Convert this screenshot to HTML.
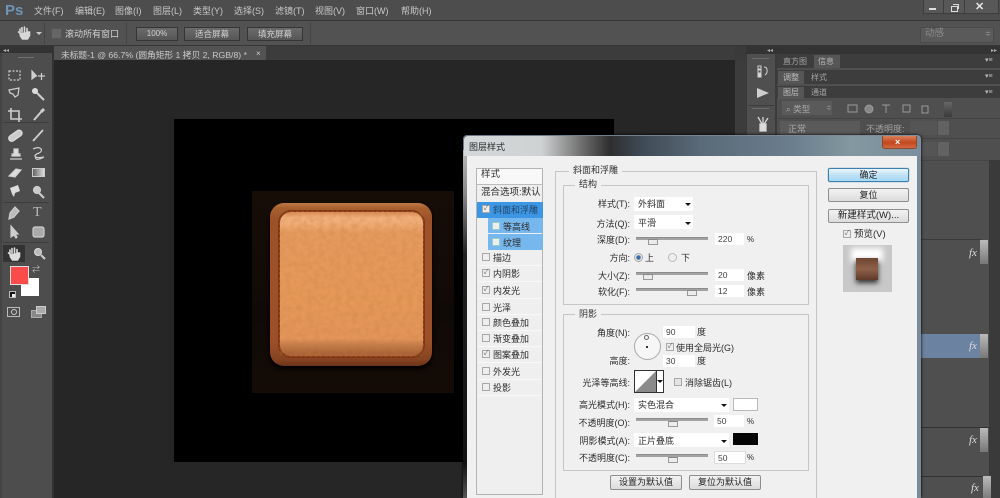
<!DOCTYPE html>
<html><head><meta charset="utf-8">
<style>
html,body{margin:0;padding:0;background:#4b4b4b}
#r{position:relative;width:1000px;height:498px;overflow:hidden;background:#4b4b4b;font-family:"Liberation Sans","Noto Sans CJK SC",sans-serif;font-size:9px;color:#222}
#r div,#r span,#r svg{position:absolute}
.t{white-space:nowrap;line-height:12px;filter:blur(.35px)}
.m{color:#c9c9c9;font-size:9px;top:5px}
.d{color:#2c2c2c;font-size:9px}
.dr{color:#2c2c2c;font-size:9px;text-align:right;width:70px;left:560px}
.ob{top:27px;height:12px;background:linear-gradient(#6b6b6b,#565656);border:1px solid #353535;color:#d2d2d2;text-align:center;line-height:12px;font-size:8.5px;filter:blur(.35px)}
.pt{color:#a5a5a5;font-size:8px}
.ck{width:6px;height:6px;background:#eee;border:1px solid #a8a8a8;left:482px;color:#666;font-size:7px;line-height:6px;text-align:center}
.sel{background:#fff;height:14px;border-radius:1px}
.ar{width:0;height:0;border-left:3px solid transparent;border-right:3px solid transparent;border-top:3px solid #111}
.inp{background:#fff;height:12px;font-size:8.5px;line-height:13px;padding-left:3px;color:#444;filter:blur(.3px)}
.sl{height:2px;width:72px;left:636px;background:#a2a2a2;border-top:1px solid #8d8d8d}
.th{width:8px;height:4px;background:#ececec;border:1px solid #999;border-top-color:#888}
.fs{border:1px solid #c6c6c6}
.lg{background:#f0f0f0;padding:0 4px;color:#333}
.btn{background:linear-gradient(#f2f2f2,#dcdcdc);border:1px solid #8e8e8e;border-radius:2px;text-align:center;color:#222;line-height:13px;filter:blur(.3px);font-size:9px}
.fx{color:#ddd;font-family:"Liberation Serif",serif;font-style:italic;font-size:11px;left:969px}
.h{left:980px;width:8px;height:24px;background:linear-gradient(#bbb,#777)}
.sep{height:1px;background:#f8f8f8;left:477px;width:65px}
</style></head><body><div id="r">

<!-- menu bar -->
<div style="left:0;top:0;width:1000px;height:20px;background:#4d4d4d;border-bottom:1px solid #363636"></div>
<span class="t" style="left:5px;top:2px;font-size:15px;line-height:18px;font-weight:bold;color:#6f94b4">Ps</span>
<span class="t m" style="left:34px">文件(F)</span><span class="t m" style="left:75px">编辑(E)</span><span class="t m" style="left:115px">图像(I)</span><span class="t m" style="left:153px">图层(L)</span><span class="t m" style="left:193px">类型(Y)</span><span class="t m" style="left:234px">选择(S)</span><span class="t m" style="left:275px">滤镜(T)</span><span class="t m" style="left:315px">视图(V)</span><span class="t m" style="left:356px">窗口(W)</span><span class="t m" style="left:401px">帮助(H)</span>
<div style="left:923px;top:0;width:74px;height:13px;background:#585858;border:1px solid #3e3e3e;border-top:0"></div>
<div style="left:943px;top:0;width:1px;height:13px;background:#3e3e3e"></div><div style="left:964px;top:0;width:1px;height:13px;background:#3e3e3e"></div>
<div style="left:929px;top:8px;width:7px;height:2px;background:#ddd"></div>
<div style="left:951px;top:6px;width:5px;height:4px;border:1px solid #ddd"></div><div style="left:953px;top:4px;width:5px;height:4px;border:1px solid #ddd;border-left:0;border-bottom:0"></div>
<span class="t" style="left:975px;top:1px;color:#e6e6e6;font-size:11px;font-weight:bold">✕</span>

<!-- options bar -->
<div style="left:0;top:21px;width:1000px;height:24px;background:#525252;border-bottom:1px solid #363636"></div>
<svg style="left:17px;top:25px" width="14" height="15" viewBox="0 0 14 15"><path d="M3 8V4M5 7V2.5M7.5 7V2M10 7.5V3.5M3 8L1.5 7M3 8l.5 3 2 3h5l2-3.500V7H10" fill="#d8d8d8" stroke="#d8d8d8" stroke-width="1.600" stroke-linecap="round"/></svg>
<div class="ar" style="left:36px;top:32px;border-top-color:#ccc"></div>
<div style="left:44px;top:22px;width:1px;height:22px;background:#444"></div>
<div style="left:51px;top:28px;width:9px;height:9px;background:#666;border:1px solid #555"></div>
<span class="t" style="left:65px;top:28px;color:#d2d2d2;font-size:9px">滚动所有窗口</span>
<div style="left:126px;top:22px;width:1px;height:22px;background:#444"></div>
<div class="ob" style="left:136px;width:40px;font-size:8px">100%</div>
<div class="ob" style="left:184px;width:54px">适合屏幕</div>
<div class="ob" style="left:247px;width:54px">填充屏幕</div>
<div style="left:310px;top:22px;width:1px;height:22px;background:#444"></div>
<div style="left:920px;top:27px;width:72px;height:14px;background:#5a5a5a;border:1px solid #4a4a4a"></div>
<span class="t" style="left:925px;top:28px;color:#8c8c8c;font-size:9.500px">动感</span>
<span class="t" style="left:985px;top:29px;color:#999;font-size:7px">≑</span>

<!-- canvas area -->
<div style="left:52px;top:46px;width:695px;height:452px;background:#3a3a3a"></div>
<div style="left:54px;top:46px;width:681px;height:14px;background:#3c3c3c"></div>
<div style="left:54px;top:46px;width:212px;height:14px;background:#535353"></div>
<span class="t" style="left:61px;top:49px;color:#c8c8c8;font-size:8.700px">未标题-1 @ 66.7% (圆角矩形 1 拷贝 2, RGB/8) *</span>
<span class="t" style="left:256px;top:48px;color:#ccc;font-size:8px">×</span>
<div style="left:54px;top:60px;width:681px;height:438px;background:#262626"></div>
<div style="left:735px;top:60px;width:11px;height:438px;background:#3c3c3c"></div>
<div style="left:174px;top:119px;width:440px;height:343px;background:#000"></div>

<!-- leather icon -->
<div style="left:252px;top:191px;width:202px;height:202px;background:linear-gradient(#170d07,#100a06 60%,#140b06)"></div>
<div style="left:270px;top:203px;width:162px;height:163px;border-radius:14px;background:linear-gradient(#bf7a48 0,#a9602f 3%,#9c5229 10%,#9b5029 85%,#854322 96%,#6a3318);box-shadow:0 3px 5px #000"></div>
<div style="left:278px;top:210px;width:147px;height:148px;border-radius:13px;background:#7a3817"></div>
<div style="left:280px;top:212px;width:143px;height:144px;border-radius:11px;background:linear-gradient(#d98a55 0,#f3b17c 4%,#f2ad77 8%,#e79a5e 14%,#e69859 60%,#e4945a 88%,#c67d4b 92%,#aa6237 98%)"></div>
<svg style="left:280px;top:212px" width="143" height="144" viewBox="0 0 143 144"><defs><filter id="lt"><feTurbulence type="fractalNoise" baseFrequency=".18" numOctaves="3" seed="4"/><feColorMatrix values="0 0 0 0 .5 0 0 0 0 .22 0 0 0 0 .05 0 0 0 .6 -.2"/></filter></defs><rect x="3" y="3" width="137" height="138" rx="10" filter="url(#lt)"/></svg>
<div style="left:279px;top:211px;width:143px;height:144px;border-radius:12px;border:1px dashed #a04a1e"></div>

<!-- tools panel -->
<div style="left:0;top:46px;width:52px;height:452px;background:#4d4d4d;border-right:2px solid #333"></div>
<div style="left:0;top:46px;width:2px;height:452px;background:#444"></div>
<div style="left:0;top:46px;width:52px;height:7px;background:#333"></div>
<span class="t" style="left:3px;top:45px;color:#aaa;font-size:6px">◂◂</span>
<div style="left:18px;top:57px;width:16px;height:1px;background:#707070"></div>
<div style="left:3px;top:122px;width:46px;height:1px;background:#3d3d3d"></div>
<div style="left:3px;top:202px;width:46px;height:1px;background:#3d3d3d"></div>
<div style="left:3px;top:242px;width:46px;height:1px;background:#3d3d3d"></div>
<svg style="left:0;top:60px" width="52" height="210" viewBox="0 60 52 210" fill="none" stroke="#cfcfcf" stroke-width="1.200">
<rect x="9" y="71" width="11" height="9" stroke-dasharray="2 1.500"/>
<path d="M32 71v8l2.500-2 2-1z" fill="#cfcfcf"/><path d="M38 76h7M41.500 73v7"/>
<path d="M9 90l10-2-1 7-3 2-2-3-3-1z"/>
<path d="M36 92l8 8" stroke-width="2"/><circle cx="35" cy="91" r="3" fill="#ddd" stroke="none"/>
<path d="M11 108v11h11M8 111h11v11" stroke-width="1.600"/>
<path d="M34 120l7-8" stroke-width="2"/><path d="M41 112l3-3" stroke-width="3"/>
<rect x="8" y="133" width="15" height="6" rx="3" transform="rotate(-35 15 136)" fill="#ccc" stroke="#ddd"/>
<path d="M33 141l10-11" stroke-width="1.800"/>
<path d="M10 159h12M12 156h8v-2h-2v-5h-4v5h-2z" fill="#ddd"/>
<path d="M33 149c8-4 11 2 6 4-6 2-6 6 5 4-5 3-10 3-8 0"/>
<path d="M9 176l7-7 5 1-6 7z" fill="#ddd"/>
<path d="M10 188l8-3 2 6-5 2-1 4-2-3z" fill="#ddd" stroke="none"/>
<circle cx="37" cy="190" r="3.500" fill="#ccc" stroke="#ccc"/><path d="M39 193l5 5" stroke-width="2"/>
<path d="M15 207l-5 6-1 6 5-2 5-6z" fill="#bbb"/>
<path d="M11 226v11l3-2 2 3 1-1-2-3h3z" fill="#ccc"/>
<rect x="33" y="227" width="11" height="10" rx="2" fill="#aaa"/>
</svg>
<div style="left:32px;top:168px;width:13px;height:9px;background:linear-gradient(90deg,#666,#ddd);border:1px solid #ccc;box-sizing:border-box"></div>
<span class="t" style="left:33px;top:205px;font-family:'Liberation Serif',serif;font-size:14px;line-height:16px;color:#bbb">T</span>
<div style="left:3px;top:245px;width:22px;height:17px;background:#333"></div>
<svg style="left:7px;top:246px" width="14" height="15" viewBox="0 0 14 15"><path d="M3 8V4M5 7V2.500M7.500 7V2M10 7.500V3.500M3 8L1.500 7M3 8l.5 3 2 3h5l2-3.500V7H10" fill="#ddd" stroke="#ddd" stroke-width="1.600" stroke-linecap="round"/></svg>
<svg style="left:32px;top:246px" width="15" height="15" viewBox="0 0 15 15"><circle cx="6" cy="6" r="3.500" fill="#bbb" stroke="#ddd"/><path d="M9 9l4 4" stroke="#ccc" stroke-width="2"/></svg>
<div style="left:10px;top:266px;width:17px;height:17px;background:#fa4b4b;border:1px solid #ddd;z-index:2"></div>
<div style="left:21px;top:278px;width:18px;height:18px;background:#fff"></div>
<div style="left:9px;top:291px;width:5px;height:5px;background:#111;border:1px solid #bbb"></div>
<div style="left:12px;top:294px;width:3px;height:3px;background:#eee"></div>
<span class="t" style="left:32px;top:264px;color:#bbb;font-size:8px">⇄</span>
<div style="left:7px;top:307px;width:11px;height:8px;border:1px solid #bbb"></div>
<div style="left:11px;top:309px;width:4px;height:4px;border:1px solid #ccc;border-radius:50%"></div>
<div style="left:31px;top:310px;width:9px;height:6px;background:#888;border:1px solid #aaa"></div>
<div style="left:36px;top:306px;width:8px;height:6px;background:#aaa;border:1px solid #ccc"></div>

<!-- right panels -->
<div style="left:746px;top:46px;width:254px;height:452px;background:#4f4f4f;border-left:1px solid #3a3a3a"></div>
<div style="left:746px;top:46px;width:254px;height:8px;background:#333"></div>
<span class="t" style="left:767px;top:45px;color:#aaa;font-size:6px">◂◂</span><span class="t" style="left:991px;top:45px;color:#aaa;font-size:6px">▸▸</span>
<div style="left:775px;top:54px;width:2px;height:444px;background:#3b3b3b"></div>
<div style="left:752px;top:58px;width:17px;height:1px;background:#6b6b6b"></div>
<div style="left:748px;top:105px;width:26px;height:1px;background:#3c3c3c"></div>
<div style="left:752px;top:108px;width:17px;height:1px;background:#6b6b6b"></div>
<svg style="left:756px;top:64px" width="15" height="15" viewBox="0 0 15 15" fill="none" stroke="#d0d0d0"><rect x="2" y="2" width="3" height="3"/><rect x="2" y="6" width="3" height="3"/><rect x="2" y="10" width="3" height="3" fill="#ddd"/><path d="M8 3c4 0 4 6 1 8"/></svg>
<svg style="left:756px;top:86px" width="14" height="14" viewBox="0 0 14 14"><path d="M1 2l12 5-12 5z" fill="#cfcfcf"/></svg>
<svg style="left:755px;top:115px" width="15" height="17" viewBox="0 0 15 17" fill="none" stroke="#d5d5d5" stroke-width="1.300"><path d="M7 9L3 2M8 9V2M9 9l4-6"/><rect x="5" y="9" width="6" height="7" fill="#ddd"/></svg>

<div style="left:777px;top:54px;width:223px;height:14px;background:#3d3d3d"></div>
<div style="left:814px;top:55px;width:26px;height:13px;background:#565656"></div>
<span class="t pt" style="left:783px;top:56px">直方图</span><span class="t pt" style="left:818px;top:56px;color:#b8b8b8">信息</span>
<div style="left:777px;top:70px;width:223px;height:14px;background:#3d3d3d"></div>
<div style="left:778px;top:71px;width:26px;height:13px;background:#565656"></div>
<span class="t pt" style="left:783px;top:72px;color:#c0c0c0">调整</span><span class="t pt" style="left:811px;top:72px">样式</span>
<div style="left:777px;top:86px;width:223px;height:12px;background:#3d3d3d"></div>
<div style="left:778px;top:87px;width:26px;height:12px;background:#565656"></div>
<span class="t pt" style="left:783px;top:87px;color:#c0c0c0">图层</span><span class="t pt" style="left:811px;top:87px">通道</span>
<span class="t" style="left:985px;top:55px;color:#bbb;font-size:7px">▾≡</span><span class="t" style="left:985px;top:71px;color:#bbb;font-size:7px">▾≡</span><span class="t" style="left:985px;top:87px;color:#bbb;font-size:7px">▾≡</span>
<div style="left:782px;top:101px;width:50px;height:14px;background:#5a5a5a"></div>
<span class="t" style="left:786px;top:103px;color:#a8a8a8;font-size:8.500px">⌕ 类型</span>
<span class="t" style="left:826px;top:103px;color:#999;font-size:7px">≑</span>
<svg style="left:846px;top:103px" width="92" height="12" viewBox="0 0 92 12" fill="none" stroke="#999"><rect x="2" y="2" width="9" height="7"/><circle cx="23" cy="6" r="4" fill="#888"/><path d="M36 2h8M40 2v8"/><rect x="57" y="2" width="7" height="7"/><rect x="76" y="3" width="6" height="7"/></svg>
<div style="left:944px;top:102px;width:8px;height:15px;background:linear-gradient(#666,#3a3a3a)"></div>
<div style="left:777px;top:118px;width:223px;height:1px;background:#444"></div>
<div style="left:780px;top:121px;width:80px;height:14px;background:#5a5a5a"></div>
<span class="t" style="left:788px;top:123px;color:#a8a8a8;font-size:9px">正常</span>
<span class="t" style="left:866px;top:123px;color:#a0a0a0;font-size:9px">不透明度:</span>
<div style="left:910px;top:121px;width:27px;height:14px;background:#555"></div>
<div style="left:938px;top:121px;width:11px;height:14px;background:#626262"></div>
<div style="left:777px;top:138px;width:223px;height:1px;background:#444"></div>
<div style="left:921px;top:142px;width:16px;height:14px;background:#555"></div>
<div style="left:938px;top:142px;width:11px;height:14px;background:#626262"></div>
<div style="left:777px;top:160px;width:223px;height:1px;background:#444"></div>
<div style="left:989px;top:160px;width:11px;height:338px;background:#3a3a3a"></div>
<div style="left:921px;top:239px;width:60px;height:1px;background:#3a3a3a"></div>
<div style="left:921px;top:334px;width:67px;height:24px;background:#6b82a0"></div>
<div style="left:921px;top:427px;width:68px;height:1px;background:#333"></div>
<div style="left:921px;top:476px;width:68px;height:1px;background:#333"></div>
<span class="t fx" style="top:247px">fx</span><div class="h" style="top:240px"></div>
<span class="t fx" style="top:340px">fx</span><div class="h" style="top:334px"></div>
<span class="t fx" style="top:434px">fx</span><div class="h" style="top:428px"></div>
<span class="t fx" style="top:482px;left:971px">fx</span><div class="h" style="top:476px;left:983px"></div>

<!-- dialog -->
<div style="left:463px;top:135px;width:458px;height:363px;background:linear-gradient(90deg,#6a7885,#7f8f9e);border-radius:4px 4px 0 0;box-shadow:0 0 3px #000"></div>
<div style="left:463px;top:150px;width:4px;height:348px;background:linear-gradient(#b5b8ba,#8a8a8a 12%,#222 30%,#111 90%,#555)"></div>
<div style="left:464px;top:136px;width:456px;height:20px;border-radius:4px 4px 0 0;background:linear-gradient(90deg,#d4d8da 0,#cfd2d3 17%,#777 25%,#2e2e2e 32%,#3f4a55 39%,#5a6a78 52%,#6b7e8e 72%,#83989f 85%,#7a8e9e 100%)"></div>
<span class="t" style="left:469px;top:141px;color:#2a2a2a;font-size:9px">图层样式</span>
<div style="left:882px;top:136px;width:35px;height:13px;border-radius:0 0 3px 3px;background:linear-gradient(#d9815c,#c2471d 55%,#d46a42);border:1px solid #8a4a30;border-top:0;box-sizing:border-box"></div>
<span class="t" style="left:895px;top:136px;color:#fff;font-size:9px;font-weight:bold">×</span>
<div style="left:467px;top:156px;width:450px;height:342px;background:#f0f0f0"></div>

<!-- left list -->
<div style="left:476px;top:168px;width:67px;height:327px;border:1px solid #b4b4b4;background:#efefef;box-sizing:border-box"></div>
<div style="left:477px;top:169px;width:65px;height:15px;background:#f8f8f8;border-bottom:1px solid #bbb"></div>
<span class="t d" style="left:481px;top:169px;font-size:9.500px">样式</span>
<span class="t d" style="left:481px;top:187px;font-size:9.500px">混合选项:默认</span>
<div style="left:477px;top:202px;width:66px;height:16px;background:#3d96e4"></div>
<div style="left:488px;top:218px;width:55px;height:15px;background:#76b7ee"></div>
<div style="left:488px;top:234px;width:55px;height:16px;background:#76b7ee"></div>
<div class="ck" style="top:205px">✓</div>
<span class="t" style="left:493px;top:204px;color:#24466a;font-size:9px">斜面和浮雕</span>
<div class="ck" style="top:222px;left:492px;border-color:#9cc"></div><span class="t d" style="left:503px;top:221px">等高线</span>
<div class="ck" style="top:238px;left:492px;border-color:#9cc"></div><span class="t d" style="left:503px;top:237px">纹理</span>
<div class="sep" style="top:265px"></div><div class="sep" style="top:281px"></div><div class="sep" style="top:298px"></div><div class="sep" style="top:314px"></div><div class="sep" style="top:330px"></div><div class="sep" style="top:346px"></div><div class="sep" style="top:362px"></div><div class="sep" style="top:379px"></div><div class="sep" style="top:395px"></div>
<div class="ck" style="top:253px"></div><span class="t d" style="left:493px;top:252px">描边</span>
<div class="ck" style="top:269px">✓</div><span class="t d" style="left:493px;top:268px">内阴影</span>
<div class="ck" style="top:286px">✓</div><span class="t d" style="left:493px;top:285px">内发光</span>
<div class="ck" style="top:303px"></div><span class="t d" style="left:493px;top:302px">光泽</span>
<div class="ck" style="top:318px"></div><span class="t d" style="left:493px;top:317px">颜色叠加</span>
<div class="ck" style="top:334px"></div><span class="t d" style="left:493px;top:333px">渐变叠加</span>
<div class="ck" style="top:350px">✓</div><span class="t d" style="left:493px;top:349px">图案叠加</span>
<div class="ck" style="top:367px"></div><span class="t d" style="left:493px;top:366px">外发光</span>
<div class="ck" style="top:383px"></div><span class="t d" style="left:493px;top:382px">投影</span>

<!-- bevel group -->
<div class="fs" style="left:555px;top:171px;width:260px;height:330px"></div>
<span class="t lg" style="left:569px;top:164px">斜面和浮雕</span>
<div class="fs" style="left:563px;top:185px;width:244px;height:118px"></div>
<span class="t lg" style="left:575px;top:178px">结构</span>

<span class="t dr" style="top:198px">样式(T):</span>
<div class="sel" style="left:634px;top:197px;width:59px"></div><span class="t d" style="left:638px;top:198px">外斜面</span><div class="ar" style="left:685px;top:203px"></div>
<span class="t dr" style="top:218px">方法(Q):</span>
<div class="sel" style="left:634px;top:215px;width:59px"></div><span class="t d" style="left:638px;top:217px">平滑</span><div class="ar" style="left:685px;top:222px"></div>
<span class="t dr" style="top:234px">深度(D):</span>
<div class="sl" style="top:237px"></div><div class="th" style="left:648px;top:239px"></div>
<div class="inp" style="left:715px;top:233px;width:26px">220</div><span class="t d" style="left:747px;top:234px;font-size:8px">%</span>
<span class="t dr" style="top:252px">方向:</span>
<div style="left:634px;top:253px;width:7px;height:7px;border-radius:50%;background:radial-gradient(#3b6ea5 40%,#e6e6e6 50%);border:1px solid #aaa"></div><span class="t d" style="left:645px;top:252px">上</span>
<div style="left:668px;top:253px;width:7px;height:7px;border-radius:50%;background:#eee;border:1px solid #bbb"></div><span class="t d" style="left:681px;top:252px">下</span>
<span class="t dr" style="top:270px">大小(Z):</span>
<div class="sl" style="top:272px"></div><div class="th" style="left:643px;top:274px"></div>
<div class="inp" style="left:715px;top:269px;width:26px">20</div><span class="t d" style="left:747px;top:270px">像素</span>
<span class="t dr" style="top:286px">软化(F):</span>
<div class="sl" style="top:288px"></div><div class="th" style="left:687px;top:290px"></div>
<div class="inp" style="left:715px;top:285px;width:26px">12</div><span class="t d" style="left:747px;top:286px">像素</span>

<!-- shadow group -->
<div class="fs" style="left:563px;top:314px;width:244px;height:155px"></div>
<span class="t lg" style="left:575px;top:308px">阴影</span>
<span class="t dr" style="top:327px">角度(N):</span>
<div style="left:634px;top:333px;width:25px;height:25px;border-radius:50%;background:#f6f6f6;border:1px solid #aaa"></div>
<div style="left:646px;top:346px;width:2px;height:2px;background:#333"></div>
<div style="left:644px;top:335px;width:3px;height:3px;border-radius:50%;border:1px solid #666"></div>
<div class="inp" style="left:663px;top:326px;width:29px">90</div><span class="t d" style="left:697px;top:326px">度</span>
<div class="ck" style="left:666px;top:343px;">✓</div><span class="t d" style="left:676px;top:342px">使用全局光(G)</span>
<span class="t dr" style="top:355px">高度:</span>
<div class="inp" style="left:663px;top:355px;width:29px">30</div><span class="t d" style="left:697px;top:355px">度</span>
<span class="t dr" style="top:377px">光泽等高线:</span>
<div style="left:634px;top:370px;width:30px;height:23px;background:#fff;border:1px solid #333;box-sizing:border-box"></div>
<svg style="left:635px;top:371px" width="21" height="21" viewBox="0 0 21 21"><path d="M0 21L21 0v21z" fill="#8a8a8a"/></svg>
<div style="left:656px;top:370px;width:1px;height:23px;background:#333"></div><div class="ar" style="left:657px;top:380px"></div>
<div class="ck" style="left:674px;top:378px;background:#e4e4e4"></div><span class="t d" style="left:685px;top:377px">消除锯齿(L)</span>
<span class="t dr" style="top:399px">高光模式(H):</span>
<div class="sel" style="left:634px;top:398px;width:95px"></div><span class="t d" style="left:638px;top:399px">实色混合</span><div class="ar" style="left:721px;top:404px"></div>
<div style="left:733px;top:398px;width:23px;height:11px;background:#fff;border:1px solid #bbb"></div>
<span class="t dr" style="top:417px">不透明度(O):</span>
<div class="sl" style="top:418px"></div><div class="th" style="left:668px;top:421px"></div>
<div class="inp" style="left:714px;top:415px;width:27px">50</div><span class="t d" style="left:747px;top:416px;font-size:8px">%</span>
<span class="t dr" style="top:435px">阴影模式(A):</span>
<div class="sel" style="left:634px;top:433px;width:95px"></div><span class="t d" style="left:638px;top:435px">正片叠底</span><div class="ar" style="left:721px;top:440px"></div>
<div style="left:733px;top:433px;width:25px;height:12px;background:#050505"></div>
<span class="t dr" style="top:452px">不透明度(C):</span>
<div class="sl" style="top:454px"></div><div class="th" style="left:668px;top:457px"></div>
<div class="inp" style="left:714px;top:451px;width:27px;border:1px solid #ddd;height:11px">50</div><span class="t d" style="left:747px;top:452px;font-size:8px">%</span>
<div class="btn" style="left:610px;top:475px;width:70px;height:13px">设置为默认值</div>
<div class="btn" style="left:689px;top:475px;width:70px;height:13px">复位为默认值</div>

<!-- dialog right -->
<div class="btn" style="left:828px;top:168px;width:79px;height:12px;line-height:12px;border:1px solid #3c7fb1;background:linear-gradient(#eaf6fd,#bfe0f5 50%,#a7d9f5);box-shadow:0 0 1px #3c7fb1">确定</div>
<div class="btn" style="left:828px;top:188px;width:79px;height:12px;line-height:12px">复位</div>
<div class="btn" style="left:828px;top:209px;width:79px;height:12px;line-height:12px;font-size:9.500px">新建样式(W)...</div>
<div class="ck" style="left:843px;top:230px">✓</div><span class="t d" style="left:854px;top:229px;font-size:9.500px">预览(V)</span>
<div style="left:843px;top:245px;width:49px;height:47px;background:#c8c8c8;overflow:hidden"></div>
<div style="left:851px;top:248px;width:32px;height:14px;background:#fff;filter:blur(3px)"></div>
<div style="left:856px;top:258px;width:22px;height:22px;background:linear-gradient(#6d4632,#8f6049 50%,#5e3a28);box-shadow:0 3px 5px #333"></div>
<div style="left:917px;top:156px;width:4px;height:342px;background:#7a8a9a"></div>
</div></body></html>
